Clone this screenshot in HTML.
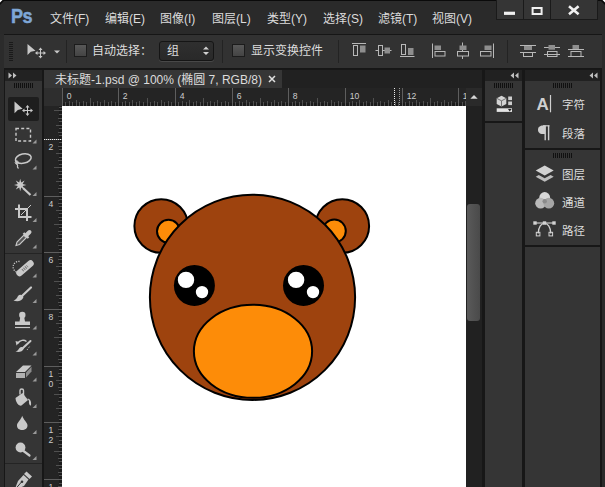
<!DOCTYPE html>
<html><head><meta charset="utf-8"><title>Ps</title>
<style>
html,body{margin:0;padding:0;}
body{width:605px;height:487px;overflow:hidden;background:#171717;position:relative;font-family:"Liberation Sans","Noto Sans CJK SC",sans-serif;color:#ddd;font-size:12px;}
.a{position:absolute;}
#menubar{left:0;top:0;width:605px;height:34px;background:#2a2a2a;border-top:1px solid #0a0a0a;box-sizing:border-box;}
.m{position:absolute;top:10px;font-size:12px;line-height:16px;color:#dcdcdc;white-space:nowrap;}
#ps{position:absolute;left:11px;top:1px;font-size:21px;font-weight:bold;color:#7ea6d6;line-height:28px;letter-spacing:-0.5px;transform:scaleX(0.86);transform-origin:0 0;-webkit-text-stroke:0.5px #7ea6d6;}
.wb{position:absolute;top:-1px;height:20px;background:#353535;border:1px solid #1a1a1a;border-top:none;box-sizing:border-box;}
#optbar{left:0;top:34px;width:605px;height:35px;background:#323232;border-top:1px solid #161616;border-bottom:1px solid #161616;box-sizing:border-box;}
.t{position:absolute;top:8px;font-size:12px;line-height:16px;color:#dcdcdc;white-space:nowrap;}
.chk{position:absolute;top:9px;width:13px;height:13px;background:linear-gradient(#585858,#444);border:1px solid #1c1c1c;box-sizing:border-box;}
.sep{position:absolute;top:5px;width:1px;height:23px;background:#232323;}
#sel{position:absolute;left:159px;top:6px;width:55px;height:20px;background:linear-gradient(#2f2f2f,#292929);border:1px solid #151515;border-radius:3px;box-sizing:border-box;box-shadow:0 1px 0 #484848;}
#tools{left:5px;top:70px;width:37px;height:417px;background:#353535;}
#toolhd{left:5px;top:70px;width:37px;height:11px;background:#222;}
.grip{position:absolute;height:5px;background:repeating-linear-gradient(90deg,#101010 0,#101010 1px,transparent 1px,transparent 2px);}
.tsep{position:absolute;left:5px;width:37px;height:1px;background:#242424;}
#doc{left:44px;top:70px;width:438px;height:417px;background:#212121;}
#tab{left:44px;top:70px;width:238px;height:18px;background:#363636;}
#tabt{position:absolute;left:11px;top:2px;font-size:12px;line-height:16px;color:#dcdcdc;white-space:nowrap;letter-spacing:0px;}
#canvas{left:62px;top:106px;width:404px;height:381px;background:#fff;}
#vsb{left:466px;top:106px;width:16px;height:381px;background:#212121;}
#thumb{left:467px;top:204px;width:13px;height:117px;border-radius:3px;background:linear-gradient(90deg,#5a5a5a,#4a4a4a);}
.pn{position:absolute;background:#353535;}
.ph{position:absolute;background:#212121;}
.pl{position:absolute;font-size:11.5px;line-height:16px;color:#dcdcdc;white-space:nowrap;left:562px;}
</style></head>
<body>
<div id="menubar" class="a"><div id="ps">Ps</div>
<span class="m" style="left:50px">文件(F)</span>
<span class="m" style="left:105px">编辑(E)</span>
<span class="m" style="left:160px">图像(I)</span>
<span class="m" style="left:212px">图层(L)</span>
<span class="m" style="left:267px">类型(Y)</span>
<span class="m" style="left:323px">选择(S)</span>
<span class="m" style="left:378px">滤镜(T)</span>
<span class="m" style="left:432px">视图(V)</span>
<div class="wb" style="left:496px;width:28px"></div><div class="wb" style="left:523px;width:28px"></div><div class="wb" style="left:550px;width:48px"></div>
<svg class="a" style="left:496px;top:-1px" width="104" height="19" viewBox="0 0 104 19"><rect x="8" y="11.7" width="11" height="3.2" fill="#f0f0f0"/><rect x="36.6" y="8" width="9" height="6" fill="none" stroke="#f0f0f0" stroke-width="2"/><path d="M73 6.3 L82.6 14.3 M82.600 6.3 L73 14.3" stroke="#f0f0f0" stroke-width="2.6" fill="none"/></svg>
</div>
<div id="optbar" class="a">
<div class="grip" style="left:9px;top:7px;width:4px;height:20px;background:repeating-linear-gradient(180deg,#1a1a1a 0,#1a1a1a 1px,transparent 1px,transparent 2px)"></div>
<svg class="a" style="left:24px;top:6px" width="40" height="22" viewBox="0 0 40 22"><path d="M3.5 3 L3.5 14 L6.8 10.8 L11.5 9.8 Z" fill="#c8c8c8"/><path d="M12.5 12 H20.5 M16.5 8 V16" stroke="#c8c8c8" stroke-width="1"/><path d="M16.5 6.500 L18.5 9 H14.5Z M16.5 17.5 L18.5 15 H14.5Z M11 12 L13.5 10 V14Z M22 12 L19.5 10 V14Z" fill="#c8c8c8"/><path d="M30 9.5 H36 L33 12.5Z" fill="#c8c8c8"/></svg>
<div class="sep" style="left:66px"></div>
<div class="chk" style="left:74px"></div><span class="t" style="left:92px">自动选择：</span>
<div id="sel"><span style="position:absolute;left:7px;top:1px;font-size:12px;line-height:16px;color:#dcdcdc">组</span><svg class="a" style="left:42px;top:3px" width="8" height="12" viewBox="0 0 8 12"><path d="M1 4.5 L4 1.5 L7 4.5Z M1 7 L4 10 L7 7Z" fill="#d0d0d0"/></svg></div>
<div class="sep" style="left:222px"></div>
<div class="chk" style="left:232px"></div><span class="t" style="left:251px">显示变换控件</span>
<div class="sep" style="left:338px"></div>
<div class="sep" style="left:507px"></div>
</div>
<div id="tools" class="a"></div><div id="toolhd" class="a"></div>
<svg class="a" style="left:8px;top:72px" width="10" height="7" viewBox="0 0 10 7"><path d="M0.5 0.5 L4 3.5 L0.5 6.5Z M5 0.5 L8.5 3.5 L5 6.5Z" fill="#c0c0c0"/></svg>
<div class="grip" style="left:14px;top:83px;width:19px"></div>
<div class="a" style="left:8px;top:97px;width:31px;height:24px;background:#1e1e1e;border-radius:2px"></div>
<div class="tsep" style="top:253px"></div><div class="tsep" style="top:463px"></div>
<svg class="a" style="left:0;top:90px" width="45" height="397" viewBox="0 90 45 397" fill="none" stroke-linecap="butt"><path d="M14.5 101.5 V113.2 L17.8 110 L22.6 108.8 Z" fill="#c9c9c9"/><path d="M23.5 110.5 H31.5 M27.5 106.5 V114.5" stroke="#c9c9c9" stroke-width="1"/><path d="M27.5 105 L29.5 107.5 H25.5Z M27.5 116 L29.5 113.5 H25.5Z M22 110.5 L24.5 108.5 V112.5Z M33 110.5 L30.5 108.5 V112.5Z" fill="#c9c9c9"/><rect x="16" y="128.5" width="14.5" height="12.5" stroke="#c9c9c9" stroke-width="1.4" stroke-dasharray="3 2.2"/><path d="M36.5 139.5 V143.5 H32.5 Z" fill="#9a9a9a"/><ellipse cx="23.3" cy="158.6" rx="8" ry="4.6" transform="rotate(-12 23.3 158.6)" stroke="#c9c9c9" stroke-width="1.5"/><path d="M16.5 161.5 C15 164 18.5 164.5 17.5 166 C17 167 18 168 18.5 168.5" stroke="#c9c9c9" stroke-width="1.3"/><circle cx="16.8" cy="162.5" r="1.6" stroke="#c9c9c9" stroke-width="1"/><path d="M36.5 165.5 V169.5 H32.5 Z" fill="#9a9a9a"/><path d="M26.4 185.0 L22.6 186.0 L24.6 189.4 L21.2 187.4 L20.2 191.2 L19.2 187.4 L15.8 189.4 L17.8 186.0 L14.0 185.0 L17.8 184.0 L15.8 180.6 L19.2 182.6 L20.2 178.8 L21.2 182.6 L24.6 180.6 L22.6 184.0Z" fill="#c9c9c9"/><path d="M23 188 L30.5 195" stroke="#c9c9c9" stroke-width="2.2"/><path d="M36.5 192.0 V196.0 H32.5 Z" fill="#9a9a9a"/><path d="M19 204.5 V217 H31.5 M15 209 H27 V221" stroke="#c9c9c9" stroke-width="2"/><path d="M21 215 L31 205" stroke="#c9c9c9" stroke-width="1"/><path d="M36.5 218.0 V222.0 H32.5 Z" fill="#9a9a9a"/><path d="M16 245.5 L17 242 L24.5 234.5 L27 237 L19.5 244.5 Z" stroke="#c9c9c9" stroke-width="1.1" fill="#555"/><path d="M23.5 233 L28.5 238" stroke="#c9c9c9" stroke-width="2.2"/><path d="M26 235.5 L29.5 232" stroke="#c9c9c9" stroke-width="4" stroke-linecap="round"/><path d="M36.5 244.5 V248.5 H32.5 Z" fill="#9a9a9a"/><path d="M19.5 273 L30.5 263.5" stroke="#c9c9c9" stroke-width="6.5" stroke-linecap="round"/><path d="M22.5 270.5 L27.5 266" stroke="#777" stroke-width="3" stroke-dasharray="1 1"/><path d="M19.5 261.5 A5.5 5.5 0 0 0 16.5 272" stroke="#c9c9c9" stroke-width="1.3" stroke-dasharray="1.2 1.2"/><path d="M36.5 273.5 V277.5 H32.5 Z" fill="#9a9a9a"/><path d="M31 287.5 L22.5 295.5" stroke="#c9c9c9" stroke-width="2.2" stroke-linecap="round"/><path d="M23.5 297 C22 301.5 17 302 13.5 300.5 C16 300 17 298 18 296 C19.5 294 22.5 294.5 23.5 297Z" fill="#c9c9c9"/><path d="M36.5 299.0 V303.0 H32.5 Z" fill="#9a9a9a"/><circle cx="22.3" cy="315" r="3.2" fill="#c9c9c9"/><path d="M20.5 316 H24 L25 321.5 H30 V325 H15 V321.5 H19.5Z" fill="#c9c9c9"/><path d="M15 327.5 H30" stroke="#c9c9c9" stroke-width="1.2"/><path d="M36.5 325.5 V329.5 H32.5 Z" fill="#9a9a9a"/><path d="M30.5 341 L23.5 347.5" stroke="#c9c9c9" stroke-width="2" stroke-linecap="round"/><path d="M24 348.5 C22.5 352 18.5 352.5 15.5 351.5 C17.5 351 18.5 349.5 19.5 348 C21 346.5 23.5 347 24 348.5Z" fill="#c9c9c9"/><path d="M17.5 343.5 C20 340 24 339.5 26.5 341.5" stroke="#c9c9c9" stroke-width="1.4"/><path d="M15.5 341 L19.5 342 L16.5 345.5Z" fill="#c9c9c9"/><path d="M27 350 L30 346" stroke="#c9c9c9" stroke-width="1" stroke-dasharray="1 1.3"/><path d="M36.5 351.5 V355.5 H32.5 Z" fill="#9a9a9a"/><path d="M16 372 L23 365.5 H31.5 L25 372 Z" fill="#c9c9c9"/><path d="M16 373 H25 V378 H16Z" fill="#b0b0b0"/><path d="M26 372.5 L31.5 366.8 V371.5 L26 377.5Z" fill="#8c8c8c"/><path d="M36.5 377.5 V381.5 H32.5 Z" fill="#9a9a9a"/><path d="M15.5 398 L22.5 393 L28 400 L21.5 405.5 C19 406.5 15.5 402 15.5 398Z" fill="#c9c9c9"/><path d="M20 394.5 V390.5 C20 388.5 23.5 388.5 23.5 390.5 V396" stroke="#c9c9c9" stroke-width="1.4"/><path d="M27.5 398.5 C30.5 399 31.5 401.5 31 405.5 C30 406 28.5 404 29 401Z" fill="#c9c9c9"/><path d="M36.5 404.0 V408.0 H32.5 Z" fill="#9a9a9a"/><path d="M22.2 415.8 C23.5 420 27.5 422.5 27.5 425.5 C27.5 428.5 25 430 22.2 430 C19.4 430 17 428.5 17 425.5 C17 422.5 21 420 22.2 415.8Z" fill="#c9c9c9"/><path d="M36.5 430.0 V434.0 H32.5 Z" fill="#9a9a9a"/><circle cx="20.5" cy="447.5" r="4.9" fill="#c9c9c9"/><path d="M23.5 451 L29.5 455.5" stroke="#c9c9c9" stroke-width="2.2" stroke-linecap="round"/><path d="M36.5 456.0 V460.0 H32.5 Z" fill="#9a9a9a"/><path d="M26.5 471.5 L32 476.5 L29.5 479 L24 474Z" fill="#c9c9c9"/><path d="M23.5 475 L28.5 479.5 L24 486 L14.5 490 L18 481Z" fill="#c9c9c9"/><path d="M15 489.5 L21.5 482" stroke="#333" stroke-width="1"/><circle cx="22" cy="481.8" r="1.3" fill="#333"/></svg>
<div id="doc" class="a"></div><div id="tab" class="a"><span id="tabt">未标题-1.psd @ 100% (椭圆 7, RGB/8)</span><svg class="a" style="left:224px;top:5px" width="8" height="8" viewBox="0 0 8 8"><path d="M1 1 L7 7 M7 1 L1 7" stroke="#e0e0e0" stroke-width="1.5"/></svg></div>
<div id="canvas" class="a"></div>
<div id="vsb" class="a"></div><div id="thumb" class="a"></div>
<svg class="a" style="left:44px;top:88px" width="438" height="399" viewBox="44 88 438 399" font-family="Liberation Sans, sans-serif" font-size="8.6" fill="#cdcdcd"><rect x="44" y="88" width="422" height="18" fill="#242424"/><rect x="44" y="106" width="18" height="381" fill="#242424"/><rect x="62" y="103" width="404" height="3" fill="#1b1b1b"/><rect x="59" y="106" width="3" height="381" fill="#1b1b1b"/><path d="M62.5 88V106" stroke="#5e5e5e" stroke-width="1"/><text x="66.8" y="98.6">0</text><path d="M65.5 102V106" stroke="#505050" stroke-width="1"/><path d="M69.5 101V106" stroke="#505050" stroke-width="1"/><path d="M72.5 102V106" stroke="#505050" stroke-width="1"/><path d="M76.5 100V106" stroke="#505050" stroke-width="1"/><path d="M79.5 102V106" stroke="#505050" stroke-width="1"/><path d="M83.5 101V106" stroke="#505050" stroke-width="1"/><path d="M86.5 102V106" stroke="#505050" stroke-width="1"/><path d="M90.5 98V106" stroke="#505050" stroke-width="1"/><path d="M93.5 102V106" stroke="#505050" stroke-width="1"/><path d="M97.5 101V106" stroke="#505050" stroke-width="1"/><path d="M100.5 102V106" stroke="#505050" stroke-width="1"/><path d="M104.5 100V106" stroke="#505050" stroke-width="1"/><path d="M108.5 102V106" stroke="#505050" stroke-width="1"/><path d="M111.5 101V106" stroke="#505050" stroke-width="1"/><path d="M115.5 102V106" stroke="#505050" stroke-width="1"/><path d="M118.5 88V106" stroke="#5e5e5e" stroke-width="1"/><text x="122.8" y="98.6">2</text><path d="M122.5 102V106" stroke="#505050" stroke-width="1"/><path d="M125.5 101V106" stroke="#505050" stroke-width="1"/><path d="M129.5 102V106" stroke="#505050" stroke-width="1"/><path d="M132.5 100V106" stroke="#505050" stroke-width="1"/><path d="M136.5 102V106" stroke="#505050" stroke-width="1"/><path d="M139.5 101V106" stroke="#505050" stroke-width="1"/><path d="M143.5 102V106" stroke="#505050" stroke-width="1"/><path d="M147.5 98V106" stroke="#505050" stroke-width="1"/><path d="M150.5 102V106" stroke="#505050" stroke-width="1"/><path d="M154.5 101V106" stroke="#505050" stroke-width="1"/><path d="M157.5 102V106" stroke="#505050" stroke-width="1"/><path d="M161.5 100V106" stroke="#505050" stroke-width="1"/><path d="M164.5 102V106" stroke="#505050" stroke-width="1"/><path d="M168.5 101V106" stroke="#505050" stroke-width="1"/><path d="M171.5 102V106" stroke="#505050" stroke-width="1"/><path d="M175.5 88V106" stroke="#5e5e5e" stroke-width="1"/><text x="179.8" y="98.6">4</text><path d="M178.5 102V106" stroke="#505050" stroke-width="1"/><path d="M182.5 101V106" stroke="#505050" stroke-width="1"/><path d="M186.5 102V106" stroke="#505050" stroke-width="1"/><path d="M189.5 100V106" stroke="#505050" stroke-width="1"/><path d="M193.5 102V106" stroke="#505050" stroke-width="1"/><path d="M196.5 101V106" stroke="#505050" stroke-width="1"/><path d="M200.5 102V106" stroke="#505050" stroke-width="1"/><path d="M203.5 98V106" stroke="#505050" stroke-width="1"/><path d="M207.5 102V106" stroke="#505050" stroke-width="1"/><path d="M210.5 101V106" stroke="#505050" stroke-width="1"/><path d="M214.5 102V106" stroke="#505050" stroke-width="1"/><path d="M217.5 100V106" stroke="#505050" stroke-width="1"/><path d="M221.5 102V106" stroke="#505050" stroke-width="1"/><path d="M225.5 101V106" stroke="#505050" stroke-width="1"/><path d="M228.5 102V106" stroke="#505050" stroke-width="1"/><path d="M232.5 88V106" stroke="#5e5e5e" stroke-width="1"/><text x="236.8" y="98.6">6</text><path d="M235.5 102V106" stroke="#505050" stroke-width="1"/><path d="M239.5 101V106" stroke="#505050" stroke-width="1"/><path d="M242.5 102V106" stroke="#505050" stroke-width="1"/><path d="M246.5 100V106" stroke="#505050" stroke-width="1"/><path d="M249.5 102V106" stroke="#505050" stroke-width="1"/><path d="M253.5 101V106" stroke="#505050" stroke-width="1"/><path d="M256.5 102V106" stroke="#505050" stroke-width="1"/><path d="M260.5 98V106" stroke="#505050" stroke-width="1"/><path d="M263.5 102V106" stroke="#505050" stroke-width="1"/><path d="M267.5 101V106" stroke="#505050" stroke-width="1"/><path d="M271.5 102V106" stroke="#505050" stroke-width="1"/><path d="M274.5 100V106" stroke="#505050" stroke-width="1"/><path d="M278.5 102V106" stroke="#505050" stroke-width="1"/><path d="M281.5 101V106" stroke="#505050" stroke-width="1"/><path d="M285.5 102V106" stroke="#505050" stroke-width="1"/><path d="M288.5 88V106" stroke="#5e5e5e" stroke-width="1"/><text x="292.8" y="98.6">8</text><path d="M292.5 102V106" stroke="#505050" stroke-width="1"/><path d="M295.5 101V106" stroke="#505050" stroke-width="1"/><path d="M299.5 102V106" stroke="#505050" stroke-width="1"/><path d="M302.5 100V106" stroke="#505050" stroke-width="1"/><path d="M306.5 102V106" stroke="#505050" stroke-width="1"/><path d="M310.5 101V106" stroke="#505050" stroke-width="1"/><path d="M313.5 102V106" stroke="#505050" stroke-width="1"/><path d="M317.5 98V106" stroke="#505050" stroke-width="1"/><path d="M320.5 102V106" stroke="#505050" stroke-width="1"/><path d="M324.5 101V106" stroke="#505050" stroke-width="1"/><path d="M327.5 102V106" stroke="#505050" stroke-width="1"/><path d="M331.5 100V106" stroke="#505050" stroke-width="1"/><path d="M334.5 102V106" stroke="#505050" stroke-width="1"/><path d="M338.5 101V106" stroke="#505050" stroke-width="1"/><path d="M341.5 102V106" stroke="#505050" stroke-width="1"/><path d="M345.5 88V106" stroke="#5e5e5e" stroke-width="1"/><text x="349.8" y="98.6">10</text><path d="M349.5 102V106" stroke="#505050" stroke-width="1"/><path d="M352.5 101V106" stroke="#505050" stroke-width="1"/><path d="M356.5 102V106" stroke="#505050" stroke-width="1"/><path d="M359.5 100V106" stroke="#505050" stroke-width="1"/><path d="M363.5 102V106" stroke="#505050" stroke-width="1"/><path d="M366.5 101V106" stroke="#505050" stroke-width="1"/><path d="M370.5 102V106" stroke="#505050" stroke-width="1"/><path d="M373.5 98V106" stroke="#505050" stroke-width="1"/><path d="M377.5 102V106" stroke="#505050" stroke-width="1"/><path d="M380.5 101V106" stroke="#505050" stroke-width="1"/><path d="M384.5 102V106" stroke="#505050" stroke-width="1"/><path d="M388.5 100V106" stroke="#505050" stroke-width="1"/><path d="M391.5 102V106" stroke="#505050" stroke-width="1"/><path d="M395.5 101V106" stroke="#505050" stroke-width="1"/><path d="M398.5 102V106" stroke="#505050" stroke-width="1"/><path d="M402.5 88V106" stroke="#5e5e5e" stroke-width="1"/><text x="406.8" y="98.6">12</text><path d="M405.5 102V106" stroke="#505050" stroke-width="1"/><path d="M409.5 101V106" stroke="#505050" stroke-width="1"/><path d="M412.5 102V106" stroke="#505050" stroke-width="1"/><path d="M416.5 100V106" stroke="#505050" stroke-width="1"/><path d="M419.5 102V106" stroke="#505050" stroke-width="1"/><path d="M423.5 101V106" stroke="#505050" stroke-width="1"/><path d="M427.5 102V106" stroke="#505050" stroke-width="1"/><path d="M430.5 98V106" stroke="#505050" stroke-width="1"/><path d="M434.5 102V106" stroke="#505050" stroke-width="1"/><path d="M437.5 101V106" stroke="#505050" stroke-width="1"/><path d="M441.5 102V106" stroke="#505050" stroke-width="1"/><path d="M444.5 100V106" stroke="#505050" stroke-width="1"/><path d="M448.5 102V106" stroke="#505050" stroke-width="1"/><path d="M451.5 101V106" stroke="#505050" stroke-width="1"/><path d="M455.5 102V106" stroke="#505050" stroke-width="1"/><path d="M458.5 88V106" stroke="#5e5e5e" stroke-width="1"/><text x="462.8" y="98.6">14</text><path d="M462.5 102V106" stroke="#505050" stroke-width="1"/><path d="M465.5 101V106" stroke="#505050" stroke-width="1"/><path d="M59 107.5H62" stroke="#505050" stroke-width="1"/><path d="M54 110.5H62" stroke="#505050" stroke-width="1"/><path d="M59 114.5H62" stroke="#505050" stroke-width="1"/><path d="M58 118.5H62" stroke="#505050" stroke-width="1"/><path d="M59 121.5H62" stroke="#505050" stroke-width="1"/><path d="M56 125.5H62" stroke="#505050" stroke-width="1"/><path d="M59 128.5H62" stroke="#505050" stroke-width="1"/><path d="M58 132.5H62" stroke="#505050" stroke-width="1"/><path d="M59 135.5H62" stroke="#505050" stroke-width="1"/><path d="M44 139.5H62" stroke="#5e5e5e" stroke-width="1"/><text x="48.5" y="150.3">2</text><path d="M59 142.5H62" stroke="#505050" stroke-width="1"/><path d="M58 146.5H62" stroke="#505050" stroke-width="1"/><path d="M59 149.5H62" stroke="#505050" stroke-width="1"/><path d="M56 153.5H62" stroke="#505050" stroke-width="1"/><path d="M59 157.5H62" stroke="#505050" stroke-width="1"/><path d="M58 160.5H62" stroke="#505050" stroke-width="1"/><path d="M59 164.5H62" stroke="#505050" stroke-width="1"/><path d="M54 167.5H62" stroke="#505050" stroke-width="1"/><path d="M59 171.5H62" stroke="#505050" stroke-width="1"/><path d="M58 174.5H62" stroke="#505050" stroke-width="1"/><path d="M59 178.5H62" stroke="#505050" stroke-width="1"/><path d="M56 181.5H62" stroke="#505050" stroke-width="1"/><path d="M59 185.5H62" stroke="#505050" stroke-width="1"/><path d="M58 188.5H62" stroke="#505050" stroke-width="1"/><path d="M59 192.5H62" stroke="#505050" stroke-width="1"/><path d="M44 196.5H62" stroke="#5e5e5e" stroke-width="1"/><text x="48.5" y="207.3">4</text><path d="M59 199.5H62" stroke="#505050" stroke-width="1"/><path d="M58 203.5H62" stroke="#505050" stroke-width="1"/><path d="M59 206.5H62" stroke="#505050" stroke-width="1"/><path d="M56 210.5H62" stroke="#505050" stroke-width="1"/><path d="M59 213.5H62" stroke="#505050" stroke-width="1"/><path d="M58 217.5H62" stroke="#505050" stroke-width="1"/><path d="M59 220.5H62" stroke="#505050" stroke-width="1"/><path d="M54 224.5H62" stroke="#505050" stroke-width="1"/><path d="M59 227.5H62" stroke="#505050" stroke-width="1"/><path d="M58 231.5H62" stroke="#505050" stroke-width="1"/><path d="M59 234.5H62" stroke="#505050" stroke-width="1"/><path d="M56 238.5H62" stroke="#505050" stroke-width="1"/><path d="M59 242.5H62" stroke="#505050" stroke-width="1"/><path d="M58 245.5H62" stroke="#505050" stroke-width="1"/><path d="M59 249.5H62" stroke="#505050" stroke-width="1"/><path d="M44 252.5H62" stroke="#5e5e5e" stroke-width="1"/><text x="48.5" y="263.3">6</text><path d="M59 256.5H62" stroke="#505050" stroke-width="1"/><path d="M58 259.5H62" stroke="#505050" stroke-width="1"/><path d="M59 263.5H62" stroke="#505050" stroke-width="1"/><path d="M56 266.5H62" stroke="#505050" stroke-width="1"/><path d="M59 270.5H62" stroke="#505050" stroke-width="1"/><path d="M58 273.5H62" stroke="#505050" stroke-width="1"/><path d="M59 277.5H62" stroke="#505050" stroke-width="1"/><path d="M54 281.5H62" stroke="#505050" stroke-width="1"/><path d="M59 284.5H62" stroke="#505050" stroke-width="1"/><path d="M58 288.5H62" stroke="#505050" stroke-width="1"/><path d="M59 291.5H62" stroke="#505050" stroke-width="1"/><path d="M56 295.5H62" stroke="#505050" stroke-width="1"/><path d="M59 298.5H62" stroke="#505050" stroke-width="1"/><path d="M58 302.5H62" stroke="#505050" stroke-width="1"/><path d="M59 305.5H62" stroke="#505050" stroke-width="1"/><path d="M44 309.5H62" stroke="#5e5e5e" stroke-width="1"/><text x="48.5" y="320.3">8</text><path d="M59 312.5H62" stroke="#505050" stroke-width="1"/><path d="M58 316.5H62" stroke="#505050" stroke-width="1"/><path d="M59 320.5H62" stroke="#505050" stroke-width="1"/><path d="M56 323.5H62" stroke="#505050" stroke-width="1"/><path d="M59 327.5H62" stroke="#505050" stroke-width="1"/><path d="M58 330.5H62" stroke="#505050" stroke-width="1"/><path d="M59 334.5H62" stroke="#505050" stroke-width="1"/><path d="M54 337.5H62" stroke="#505050" stroke-width="1"/><path d="M59 341.5H62" stroke="#505050" stroke-width="1"/><path d="M58 344.5H62" stroke="#505050" stroke-width="1"/><path d="M59 348.5H62" stroke="#505050" stroke-width="1"/><path d="M56 351.5H62" stroke="#505050" stroke-width="1"/><path d="M59 355.5H62" stroke="#505050" stroke-width="1"/><path d="M58 359.5H62" stroke="#505050" stroke-width="1"/><path d="M59 362.5H62" stroke="#505050" stroke-width="1"/><path d="M44 366.5H62" stroke="#5e5e5e" stroke-width="1"/><text x="48.5" y="377.3">1</text><text x="48.5" y="387.3">0</text><path d="M59 369.5H62" stroke="#505050" stroke-width="1"/><path d="M58 373.5H62" stroke="#505050" stroke-width="1"/><path d="M59 376.5H62" stroke="#505050" stroke-width="1"/><path d="M56 380.5H62" stroke="#505050" stroke-width="1"/><path d="M59 383.5H62" stroke="#505050" stroke-width="1"/><path d="M58 387.5H62" stroke="#505050" stroke-width="1"/><path d="M59 390.5H62" stroke="#505050" stroke-width="1"/><path d="M54 394.5H62" stroke="#505050" stroke-width="1"/><path d="M59 397.5H62" stroke="#505050" stroke-width="1"/><path d="M58 401.5H62" stroke="#505050" stroke-width="1"/><path d="M59 405.5H62" stroke="#505050" stroke-width="1"/><path d="M56 408.5H62" stroke="#505050" stroke-width="1"/><path d="M59 412.5H62" stroke="#505050" stroke-width="1"/><path d="M58 415.5H62" stroke="#505050" stroke-width="1"/><path d="M59 419.5H62" stroke="#505050" stroke-width="1"/><path d="M44 422.5H62" stroke="#5e5e5e" stroke-width="1"/><text x="48.5" y="433.3">1</text><text x="48.5" y="443.3">2</text><path d="M59 426.5H62" stroke="#505050" stroke-width="1"/><path d="M58 429.5H62" stroke="#505050" stroke-width="1"/><path d="M59 433.5H62" stroke="#505050" stroke-width="1"/><path d="M56 436.5H62" stroke="#505050" stroke-width="1"/><path d="M59 440.5H62" stroke="#505050" stroke-width="1"/><path d="M58 444.5H62" stroke="#505050" stroke-width="1"/><path d="M59 447.5H62" stroke="#505050" stroke-width="1"/><path d="M54 451.5H62" stroke="#505050" stroke-width="1"/><path d="M59 454.5H62" stroke="#505050" stroke-width="1"/><path d="M58 458.5H62" stroke="#505050" stroke-width="1"/><path d="M59 461.5H62" stroke="#505050" stroke-width="1"/><path d="M56 465.5H62" stroke="#505050" stroke-width="1"/><path d="M59 468.5H62" stroke="#505050" stroke-width="1"/><path d="M58 472.5H62" stroke="#505050" stroke-width="1"/><path d="M59 475.5H62" stroke="#505050" stroke-width="1"/><path d="M44 479.5H62" stroke="#5e5e5e" stroke-width="1"/><text x="48.5" y="490.3">1</text><text x="48.5" y="500.3">4</text><path d="M59 483.5H62" stroke="#505050" stroke-width="1"/><path d="M58 486.5H62" stroke="#505050" stroke-width="1"/><rect x="466" y="88" width="16" height="18" fill="#2a2a2a"/><rect x="44" y="88" width="18" height="18" fill="#2e2e2e"/><path d="M44 139.5H62" stroke="#eee" stroke-width="1" stroke-dasharray="1 1"/><path d="M394.5 88V106" stroke="#eee" stroke-width="1" stroke-dasharray="1 1"/><path d="M399.5 88V106" stroke="#999" stroke-width="1" stroke-dasharray="1 1"/><path d="M470.300 98.8 L474 95 L477.7 98.8Z" fill="#d8d8d8"/></svg>
<svg class="a" style="left:62px;top:106px" width="404" height="381" viewBox="62 106 404 381"><g stroke="#000" stroke-width="2"><circle cx="161.2" cy="226" r="26.8" fill="#9e430e"/><circle cx="342.3" cy="226" r="26.8" fill="#9e430e"/><circle cx="168.5" cy="231.3" r="11.5" fill="#fd8c08"/><circle cx="334.3" cy="231" r="11.5" fill="#fd8c08"/><circle cx="252.5" cy="297.3" r="102.6" fill="#9e430e"/><ellipse cx="253" cy="351.3" rx="59.1" ry="46.5" fill="#fd8c08"/></g><circle cx="194.4" cy="285.4" r="20.5" fill="#000"/><circle cx="303.5" cy="285.4" r="20.5" fill="#000"/><circle cx="186" cy="279.9" r="8.2" fill="#fff"/><circle cx="202" cy="292.1" r="6.2" fill="#fff"/><circle cx="296.1" cy="279.9" r="8.2" fill="#fff"/><circle cx="313" cy="292.1" r="6.2" fill="#fff"/></svg>
<div class="ph" style="left:485px;top:70px;width:37px;height:11px"></div><div class="ph" style="left:525px;top:70px;width:75px;height:11px"></div>
<div class="pn" style="left:485px;top:81px;width:37px;height:40px"></div><div class="pn" style="left:485px;top:123px;width:37px;height:364px"></div>
<div class="pn" style="left:525px;top:81px;width:75px;height:67px"></div><div class="pn" style="left:525px;top:150px;width:75px;height:95px"></div><div class="pn" style="left:525px;top:247px;width:75px;height:240px"></div>
<svg class="a" style="left:510px;top:72px" width="10" height="7" viewBox="0 0 10 7"><path d="M4 0.5 L0.5 3.5 L4 6.5Z M8.5 0.5 L5 3.5 L8.5 6.5Z" fill="#c0c0c0"/></svg>
<svg class="a" style="left:589px;top:72px" width="10" height="7" viewBox="0 0 10 7"><path d="M4 0.5 L0.5 3.5 L4 6.5Z M8.5 0.5 L5 3.5 L8.5 6.5Z" fill="#c0c0c0"/></svg>
<div class="grip" style="left:494px;top:83px;width:19px"></div><div class="grip" style="left:553px;top:83px;width:19px"></div><div class="grip" style="left:553px;top:153px;width:19px"></div>
<span class="pl" style="top:97px">字符</span>
<span class="pl" style="top:126px">段落</span>
<span class="pl" style="top:167px">图层</span>
<span class="pl" style="top:195px">通道</span>
<span class="pl" style="top:223px">路径</span>
<svg class="a" style="left:484px;top:81px" width="121" height="170" viewBox="484 81 121 170" fill="none"><path d="M501.5 95.8 L506.3 98.3 V104 L501.5 106.6 L496.7 104 V98.3Z" fill="#d4d4d4"/><path d="M496.7 98.3 L501.5 100.8 L506.3 98.3 M501.5 100.8 V106.6" stroke="#666" stroke-width="0.9"/><rect x="508.2" y="96.5" width="3.8" height="3.6" fill="#cfcfcf"/><rect x="508.2" y="101.5" width="3.8" height="3.6" fill="#cfcfcf"/><rect x="496.7" y="108.3" width="15.3" height="3.6" fill="#e4e4e4"/><path d="M508 109 H511.6 L509.8 111.4Z" fill="#222"/><text x="536.6" y="110.2" font-family="Liberation Sans, sans-serif" font-weight="bold" font-size="17" fill="#cfcfcf">A</text><path d="M550.5 95 V112.3" stroke="#cfcfcf" stroke-width="1.2"/><path d="M545 125.5 H543 C539 125.5 538 128 538 129.7 C538 131.5 539 134 543 134 H545Z" fill="#cfcfcf"/><path d="M543 125.8 H549.5" stroke="#cfcfcf" stroke-width="1.2"/><path d="M545.2 125.5 V140.3 M548.6 125.5 V140.3" stroke="#cfcfcf" stroke-width="1.4"/><path d="M544.7 165.4 L553.7 170.5 L544.7 175.6 L535.7 170.5Z" fill="#d2d2d2"/><path d="M538.8 174.9 L535.7 176.7 L544.7 181.8 L553.7 176.7 L550.6 174.9 L544.7 178.2Z" fill="#bdbdbd"/><circle cx="544.7" cy="197.5" r="5.4" fill="#d8d8d8"/><circle cx="540.6" cy="203.2" r="5.4" fill="#b9b9b9"/><circle cx="548.8" cy="203.2" r="5.4" fill="#a5a5a5"/><circle cx="544.7" cy="201.3" r="2.2" fill="#8a8a8a"/><path d="M538.2 233.5 C538.5 220 550.5 220 550.8 233.5" stroke="#d2d2d2" stroke-width="1.3"/><path d="M534 223 H555" stroke="#d2d2d2" stroke-width="1.1"/><rect x="533.3" y="221.3" width="3.4" height="3.4" fill="#d2d2d2"/><rect x="552.3" y="221.3" width="3.4" height="3.4" fill="#d2d2d2"/><rect x="542.8" y="221.3" width="3.4" height="3.4" fill="#d2d2d2"/><rect x="536.3" y="232.3" width="3.6" height="3.6" stroke="#d2d2d2" stroke-width="1"/><rect x="549" y="232.3" width="3.6" height="3.6" stroke="#d2d2d2" stroke-width="1"/></svg>
<svg class="a" style="left:340px;top:36px" width="262" height="32" viewBox="340 36 262 32" fill="none"><path d="M352.0 43.5 L366.0 43.5" stroke="#b8b8b8" stroke-width="1"/><rect x="353.5" y="45.5" width="4.0" height="10.0" fill="none" stroke="#b8b8b8" stroke-width="1"/><rect x="360.0" y="45.5" width="5.5" height="7.0" fill="#8e8e8e"/><path d="M375.5 50.5 L391.5 50.5" stroke="#b8b8b8" stroke-width="1"/><rect x="378.5" y="45.5" width="4.0" height="10.0" fill="#323232" stroke="#b8b8b8" stroke-width="1"/><rect x="384.5" y="47.5" width="5.5" height="6.0" fill="#8e8e8e"/><path d="M400.0 56.5 L414.5 56.5" stroke="#b8b8b8" stroke-width="1"/><rect x="401.5" y="44.5" width="4.0" height="10.0" fill="none" stroke="#b8b8b8" stroke-width="1"/><rect x="408.0" y="48.0" width="5.5" height="7.0" fill="#8e8e8e"/><path d="M432.5 43.5 L432.5 58.0" stroke="#b8b8b8" stroke-width="1"/><rect x="434.5" y="45.5" width="6.5" height="4.5" fill="#8e8e8e"/><rect x="435.0" y="51.5" width="10.0" height="4.5" fill="none" stroke="#b8b8b8" stroke-width="1"/><path d="M462.5 42.5 L462.5 59.0" stroke="#b8b8b8" stroke-width="1"/><rect x="459.5" y="45.5" width="7.0" height="4.5" fill="#8e8e8e"/><rect x="457.5" y="51.5" width="11.0" height="4.5" fill="#323232" stroke="#b8b8b8" stroke-width="1"/><path d="M493.5 43.5 L493.5 58.0" stroke="#b8b8b8" stroke-width="1"/><rect x="484.5" y="45.5" width="7.0" height="4.5" fill="#8e8e8e"/><rect x="480.5" y="51.5" width="10.5" height="4.5" fill="none" stroke="#b8b8b8" stroke-width="1"/><path d="M520.0 45.5 L536.0 45.5" stroke="#b8b8b8" stroke-width="1"/><rect x="524.0" y="46.0" width="8.0" height="4.0" fill="#8e8e8e"/><path d="M520.0 52.5 L536.0 52.5" stroke="#b8b8b8" stroke-width="1"/><rect x="523.5" y="52.5" width="9.0" height="4.0" fill="none" stroke="#b8b8b8" stroke-width="1"/><path d="M544.0 47.5 L560.0 47.5" stroke="#b8b8b8" stroke-width="1"/><rect x="548.5" y="45.0" width="6.5" height="4.7" fill="#8e8e8e"/><rect x="547.5" y="51.5" width="9.5" height="5.0" fill="#323232" stroke="#b8b8b8" stroke-width="1"/><path d="M544.0 54.5 L560.0 54.5" stroke="#b8b8b8" stroke-width="1"/><rect x="572.5" y="45.0" width="6.5" height="4.0" fill="#8e8e8e"/><path d="M568.0 49.5 L584.0 49.5" stroke="#b8b8b8" stroke-width="1"/><rect x="571.0" y="51.5" width="10.0" height="5.0" fill="none" stroke="#b8b8b8" stroke-width="1"/><path d="M568.0 56.5 L584.0 56.5" stroke="#b8b8b8" stroke-width="1"/></svg>
<div class="a" style="left:0;top:34px;width:4px;height:453px;background:#2b2b2b"></div><div class="a" style="left:602px;top:34px;width:3px;height:453px;background:#2b2b2b"></div>
<svg class="a" style="left:0;top:0" width="605" height="6" viewBox="0 0 605 6"><path d="M0 0 H5 L0 5Z" fill="#0a0a0a"/><path d="M0 0 H2.500 L0 2.500Z" fill="#fff"/><path d="M605 0 H600 L605 5Z" fill="#0a0a0a"/><path d="M605 0 H602.5 L605 2.500Z" fill="#fff"/></svg>
</body></html>
